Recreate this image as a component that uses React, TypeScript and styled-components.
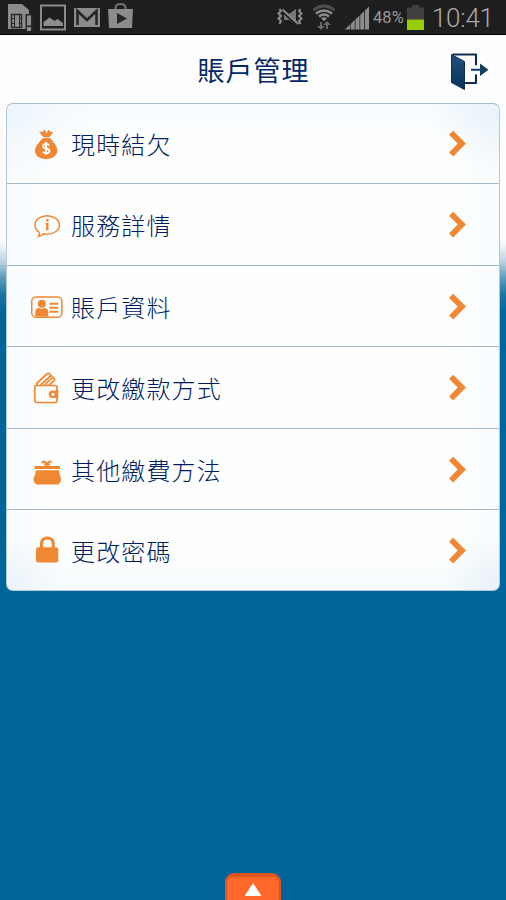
import React from "react";
import styled, { createGlobalStyle } from "styled-components";

const ORANGE = "#f08833";
const GREY = "#8c8c8c";

const GlobalStyle = createGlobalStyle`
  * { box-sizing: border-box; }
  html, body { margin: 0; padding: 0; }
  body {
    font-family: Roboto, "Noto Sans CJK TC", sans-serif;
    background: #006699;
  }
  svg { display: block; flex: none; }
`;

const Screen = styled.div`
  width: 506px;
  height: 900px;
  overflow: hidden;
  display: flex;
  flex-direction: column;
  background: linear-gradient(#fdfdfd 0 236px, #f4f8fb 244px, #b9d2e0 262px, #5c9bbd 278px, #1c76a4 294px, #006699 314px);
`;

const StatusBar = styled.header`
  height: 35px;
  flex: none;
  display: flex;
  justify-content: space-between;
  background: #1e1e1e;
  border-bottom: 1px solid #000;
`;

const StatusGroup = styled.div`
  display: flex;
  align-items: flex-start;
`;

const Spacer = styled.span<{ $w: number }>`
  flex: none;
  width: ${({ $w }) => $w}px;
`;

const Battery = styled.span`
  width: 34px;
  margin-left: 3px;
  padding-top: 8px;
  font: 400 16.5px/20px Roboto, sans-serif;
  letter-spacing: 0.1px;
  color: #999;
  white-space: nowrap;
`;

const Clock = styled.time`
  width: 74px;
  padding-top: 3px;
  font: 300 26px/30px Roboto, sans-serif;
  letter-spacing: -0.3px;
  color: #aaa;
  white-space: nowrap;
`;

const TitleBar = styled.div`
  height: 68px;
  flex: none;
  display: grid;
  grid-template-columns: 57px 1fr 57px;
`;

const Title = styled.h1`
  grid-column: 2;
  margin: 0;
  padding-left: 1px;
  text-align: center;
  font: 400 27px/70px "Noto Sans CJK TC", sans-serif;
  letter-spacing: 1px;
  color: #042766;
`;

const LogoutButton = styled.button`
  border: 0;
  padding: 17px 0 0;
  background: none;
  justify-self: start;
  align-self: start;
`;

const Menu = styled.ul`
  list-style: none;
  margin: 0 6px;
  padding: 0;
  flex: none;
  height: 488px;
  display: grid;
  grid-template-rows: 79px repeat(4, 81.6px) 1fr;
  border: 1px solid #b4c8d8;
  border-top-color: #a5bdcf;
  border-radius: 7px;
  background:
    radial-gradient(circle at 0 0, #edf6fc, rgba(250, 253, 255, 0) 80px),
    radial-gradient(circle at 100% 0, #e8f2f9, rgba(250, 253, 255, 0) 70px),
    radial-gradient(circle at 0 100%, #e9f3f9, rgba(250, 253, 255, 0) 55px),
    radial-gradient(circle at 100% 100%, #e6f1f8, rgba(250, 253, 255, 0) 55px),
    linear-gradient(#f6fbfe, rgba(254, 254, 254, 0) 36px calc(100% - 50px), #f7fbfd),
    linear-gradient(90deg, #f8fcfe, #fefefe 60px calc(100% - 60px), #f8fcfe);
`;

const Row = styled.li`
  display: grid;
  grid-template-columns: 36px 1fr 20px;
  column-gap: 6px;
  align-items: center;
  padding: 0 32px 0 22px;
  & + & {
    padding-top: 2px;
    border-top: 1px solid #a3b9cc;
  }
`;

const Label = styled.span`
  font: 300 24px/36px "Noto Sans CJK TC", sans-serif;
  letter-spacing: 1.15px;
  color: #001c5e;
  white-space: nowrap;
`;

const Footer = styled.footer`
  margin-top: auto;
  display: flex;
  justify-content: center;
`;

const PullTab = styled.button`
  width: 56px;
  height: 27px;
  border: 2px solid #d95523;
  border-width: 4px 2px 0;
  border-radius: 9px 9px 0 0;
  padding: 6px 0 0;
  display: flex;
  justify-content: center;
  align-items: flex-start;
  background: #ff6828;
`;

const NotificationIcons = () => (
  <svg width="140" height="34" viewBox="0 0 140 34" fill={GREY}>
    <path d="M8 4h14l7 6v4h-3v15H8z" />
    <path d="M11.500 14.500h10v13h-10z" fill="none" stroke="#292929" strokeWidth="1.400" />
    <path d="M14.500 15v12M19.500 15v12M12 18.500h2.500M12 23.500h2.500M19.500 18.500h2M19.500 23.500h2" stroke="#292929" />
    <path d="M25.500 14h7v17h-7z" fill="#292929" />
    <path d="M27 15.500h4v10h-4zM27 27h4v4h-4z" />
    <path d="M41 5.500h24v24H41z" fill="none" stroke={GREY} strokeWidth="2" />
    <path d="M43.500 22l6-4.500 5 3.500 3-2 5.500 4v3h-19.500z" />
    <path d="M74 8h26v19H74z" />
    <path d="M77.500 25V11l9.500 9L96.500 11v14" fill="none" stroke="#252525" strokeWidth="2.500" />
    <path d="M115.500 10V8q0-4 5-4t5 4v2" fill="none" stroke="#727272" strokeWidth="2" />
    <path d="M108 9h25l-1 19h-23z" />
    <path d="M117 13v11l10-5.500z" fill="#252525" />
  </svg>
);

const MutedIcon = () => (
  <svg width="26" height="34" viewBox="0 0 26 34">
    <path d="M7 14h5l7-5v16l-7-5H7z" fill="#777" />
    <path d="M4.500 10.500L20 25.500" stroke="#202020" strokeWidth="2" />
    <path d="M5.500 9.500L21.500 24" stroke={GREY} strokeWidth="2" />
    <path d="M2.500 9l1.500 2-2.500 2.500L4 16l-2.500 2.500L4 21l-1.500 3M23.500 9L22 11l2.500 2.500L22 16l2.500 2.500L22 21l1.500 3" fill="none" stroke={GREY} strokeWidth="2" />
  </svg>
);

const WifiIcon = () => (
  <svg width="24" height="34" viewBox="0 0 24 34">
    <path d="M1.500 10q10.500-8 21 0" fill="none" stroke="#505050" strokeWidth="2.700" />
    <path d="M4 13.500q8-6 16 0M7 16.500q5-4 10 0" fill="none" stroke={GREY} strokeWidth="2.500" />
    <path d="M9 18.200q3-2 6 0l-3 3z" fill={GREY} />
    <path d="M9 22v6M15 29v-6" stroke="#666" strokeWidth="2" />
    <path d="M5 26h8l-4 4zM11 25h8l-4-4z" fill="#666" />
  </svg>
);

const SignalIcon = () => (
  <svg width="25" height="34" viewBox="0 0 25 34" fill={GREY}>
    <path d="M0 29.500l5-5v5zM5.700 24l4-4v9.500h-4zM10.500 19.500l4-4v14h-4zM15.200 15l4-4v18.500h-4zM20 10.500L24 6.500v23h-4z" />
  </svg>
);

const BatteryIcon = () => (
  <svg width="17" height="34" viewBox="0 0 17 34">
    <path d="M0 7.500h5V5h7v2.500h5v12H0z" fill="#414141" />
    <path d="M0 19.500h17V30H0z" fill="#99cc00" />
  </svg>
);

const LogoutIcon = () => (
  <svg width="40" height="40" viewBox="0 0 40 40">
    <defs>
      <linearGradient id="door" x2="0" y2="1">
        <stop stopColor="#234f7c" />
        <stop offset="1" stopColor="#073457" />
      </linearGradient>
    </defs>
    <path d="M3.500 2.500H27v10.700M27 22.500V31H16" fill="none" stroke="#102c4c" strokeWidth="2.100" strokeLinejoin="round" />
    <path d="M2.500 2.500L15.500 9.500v28L2.500 30.500z" fill="url(#door)" stroke="#0b3155" />
    <path d="M22 16.800h9v-5.300l8.500 6.300L31 24v-5.200h-9z" fill="#153d64" />
  </svg>
);

const ChevronIcon = () => (
  <svg width="20" height="30" viewBox="0 0 20 30">
    <path d="M2 5.800L6.200 1.700 19 14.500 6.200 27.500 2 23.400 10.700 14.500z" fill={ORANGE} />
  </svg>
);

const IconFrame = ({ children }: { children: React.ReactNode }) => (
  <svg width="36" height="36" viewBox="0 0 36 36" fill={ORANGE}>{children}</svg>
);

const BagIcon = () => (
  <IconFrame>
    <path d="M14 11L10 5.500q3 .7 4.200 0 .7-1.800 2-1.300l1.300 3 1.700-3q1.200-.4 1.800 1.300 1.500.7 3.500.2l-4 5.300z" />
    <path d="M13.500 12.300q4-1 8 0l5 6.700q3.500 6 .3 10-3.200 4-9.800 4t-9.700-4q-3-4 .6-10z" />
    <path d="M20.200 19.500q-1-1.500-3-1.500-3 0-3 2.200 0 1.800 3 2.300 3.300.6 3.300 2.600 0 2.200-3.100 2.200-2.200 0-3.400-1.500M17.200 16v13" fill="none" stroke="#fff" strokeWidth="1.800" />
  </IconFrame>
);

const InfoIcon = () => (
  <IconFrame>
    <path d="M10 25.200C7.500 23.500 6 20.900 6 18.100c0-5.300 5.300-9.400 12-9.400s12.400 4 12.400 9.200-5.500 9.300-12.300 9.300q-2 0-3.700-.4-2 2.500-4.900 2.800 1.400-2 .5-4.400z" fill="none" stroke={ORANGE} strokeWidth="1.500" />
    <path d="M17.100 12h2.400v2.400h-2.400zM16.500 15.900h3v7.300h-2.400v-6h-.6z" />
  </IconFrame>
);

const ProfileIcon = () => (
  <IconFrame>
    <rect x="2.700" y="8" width="30.200" height="20.200" rx="4.500" fill="none" stroke={ORANGE} strokeWidth="1.500" />
    <circle cx="12.800" cy="14.800" r="4" />
    <path d="M6.300 27.500v-4.500q0-4 4-4l2.500 1 2.500-1q4 0 4 4v4.500z" />
    <path d="M20.500 14.700h8.700M20.500 18.700h8.700M20.500 22.700h8.700" stroke={ORANGE} strokeWidth="1.900" />
  </IconFrame>
);

const WalletIcon = () => (
  <IconFrame>
    <g fill="none" stroke={ORANGE} strokeWidth="1.700" strokeLinejoin="round">
      <path d="M28 21.500v-4.500q0-1.500-1.500-1.500H8q-2.300-.1-2.300 2V30q0 2.500 2.500 2.500H26q2 0 2-2v-3" />
      <path d="M8 15v-2L18.500 3.500q1-.6 1.800.2l1.700 1.800L11.500 15M22 5.500l3.500 3.300q.7 1-.2 1.800L20 15M15.500 15l8-7.700" />
    </g>
    <path d="M29.300 20.500H23q-3.300.4-3.300 3.800T23 28h6.300z" />
    <circle cx="24" cy="24.300" r="1.600" fill="#fff" />
  </IconFrame>
);

const PurseIcon = () => (
  <IconFrame>
    <path d="M5.500 14H31v2.900H5.500zM7 18.200h23q.2 3.600 1.700 7.200 1.200 4.300-2.500 7.100H7.300q-3.700-2.800-2.500-7 1.900-3.700 2.200-7.300z" />
    <path d="M13 11q1.800-2.500 3.500-.5l1 1.500q1.500 1.500 3 0M22.500 10.500q-1-2-3 0l-1 1.500q-1.500 1.500-3 0" fill="none" stroke={ORANGE} strokeWidth="2.200" />
  </IconFrame>
);

const LockIcon = () => (
  <IconFrame>
    <path d="M12.500 16v-5q0-6 5.900-6t5.900 6v5" fill="none" stroke={ORANGE} strokeWidth="3" />
    <rect x="7" y="14.200" width="22.300" height="15.300" rx="2.200" />
  </IconFrame>
);

const items = [
  { label: "現時結欠", Icon: BagIcon },
  { label: "服務詳情", Icon: InfoIcon },
  { label: "賬戶資料", Icon: ProfileIcon },
  { label: "更改繳款方式", Icon: WalletIcon },
  { label: "其他繳費方法", Icon: PurseIcon },
  { label: "更改密碼", Icon: LockIcon },
];

export default function App() {
  return (
    <>
      <GlobalStyle />
      <Screen>
        <StatusBar>
          <NotificationIcons />
          <StatusGroup>
            <MutedIcon />
            <Spacer $w={9} />
            <WifiIcon />
            <Spacer $w={9} />
            <SignalIcon />
            <Battery>48%</Battery>
            <BatteryIcon />
            <Spacer $w={8} />
            <Clock>10:41</Clock>
          </StatusGroup>
        </StatusBar>
        <TitleBar>
          <Title>賬戶管理</Title>
          <LogoutButton aria-label="登出">
            <LogoutIcon />
          </LogoutButton>
        </TitleBar>
        <Menu>
          {items.map(({ label, Icon }) => (
            <Row key={label}>
              <Icon />
              <Label>{label}</Label>
              <ChevronIcon />
            </Row>
          ))}
        </Menu>
        <Footer>
          <PullTab aria-label="展開">
            <svg width="18" height="14" viewBox="0 0 18 14">
              <path d="M9 0l8.500 13H.5z" fill="#fff" />
            </svg>
          </PullTab>
        </Footer>
      </Screen>
    </>
  );
}
